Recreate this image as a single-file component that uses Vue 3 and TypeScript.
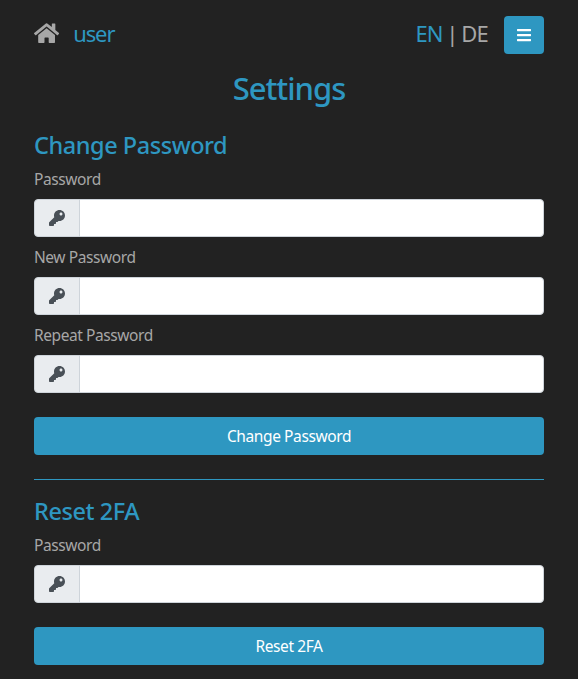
<script setup lang="ts">
import { reactive } from 'vue'

interface Field {
  id: string
  label: string
}

interface Section {
  title: string
  name: string
  fields: Field[]
}

const sections: Section[] = [
  {
    title: 'Change Password',
    name: 'change',
    fields: [
      { id: 'current', label: 'Password' },
      { id: 'next', label: 'New Password' },
      { id: 'repeat', label: 'Repeat Password' },
    ],
  },
  { title: 'Reset 2FA', name: 'reset', fields: [{ id: 'confirm', label: 'Password' }] },
]

const values = reactive<Record<string, string>>({ current: '', next: '', repeat: '', confirm: '' })
</script>

<template>
  <main class="page">
    <header class="topbar">
      <a class="home" aria-label="Home">
        <svg class="home-icon" viewBox="0 0 576 512"><path fill="currentColor" d="M280.37 148.26L96 300.11V464a16 16 0 0 0 16 16l112.06-.29a16 16 0 0 0 15.92-16V368a16 16 0 0 1 16-16h64a16 16 0 0 1 16 16v95.64a16 16 0 0 0 16 16.05L464 480a16 16 0 0 0 16-16V300L295.67 148.26a12.19 12.19 0 0 0-15.3 0zM571.6 251.47L488 182.56V44.05a12 12 0 0 0-12-12h-56a12 12 0 0 0-12 12v72.61L318.47 43a48 48 0 0 0-61 0L4.34 251.47a12 12 0 0 0-1.6 16.9l25.5 31A12 12 0 0 0 45.15 301l235.22-193.74a12.19 12.19 0 0 1 15.3 0L530.9 301a12 12 0 0 0 16.9-1.6l25.5-31a12 12 0 0 0-1.7-16.93z" /></svg>
      </a>
      <a class="user">user</a>
      <div class="lang"><a class="active">EN</a> | <a>DE</a></div>
      <button class="menu" type="button" aria-label="Menu">
        <svg class="menu-icon" viewBox="0 0 448 512"><path fill="currentColor" d="M16 132h416c8.837 0 16-7.163 16-16V76c0-8.837-7.163-16-16-16H16C7.163 60 0 67.163 0 76v40c0 8.837 7.163 16 16 16zm0 160h416c8.837 0 16-7.163 16-16v-40c0-8.837-7.163-16-16-16H16c-8.837 0-16 7.163-16 16v40c0 8.837 7.163 16 16 16zm0 160h416c8.837 0 16-7.163 16-16v-40c0-8.837-7.163-16-16-16H16c-8.837 0-16 7.163-16 16v40c0 8.837 7.163 16 16 16z" /></svg>
      </button>
    </header>

    <h1 class="title">Settings</h1>

    <template v-for="(section, i) in sections" :key="section.name">
      <hr v-if="i > 0" class="rule">
      <form :class="section.name" @submit.prevent>
        <h2 class="heading">{{ section.title }}</h2>
        <div v-for="field in section.fields" :key="field.id" class="field">
          <label :for="field.id">{{ field.label }}</label>
          <div class="group">
            <span class="addon">
              <svg class="key-icon" viewBox="0 0 512 512"><path fill="currentColor" d="M512 176.001C512 273.203 433.202 352 336 352c-11.22 0-22.19-1.062-32.827-3.069l-24.012 27.014A23.999 23.999 0 0 1 261.223 384H224v40c0 13.255-10.745 24-24 24h-40v40c0 13.255-10.745 24-24 24H24c-13.255 0-24-10.745-24-24v-78.059c0-6.365 2.529-12.47 7.029-16.971l161.802-161.802C163.108 213.814 160 195.271 160 176 160 78.798 238.797.001 335.999 0 433.488-.001 512 78.511 512 176.001zM336 128c0 26.51 21.49 48 48 48s48-21.49 48-48-21.49-48-48-48-48 21.49-48 48z" /></svg>
            </span>
            <input :id="field.id" v-model="values[field.id]" class="input" type="password">
          </div>
        </div>
        <button class="submit" type="submit">{{ section.title }}</button>
      </form>
    </template>
  </main>
</template>

<style>
body {
  background: #222;
}
</style>

<style scoped>
* {
  box-sizing: border-box;
}

.page {
  padding: 16px 34px 14px;
  font-family: "Segoe UI", "Noto Sans", "Open Sans", sans-serif;
  font-size: 15.5px;
  line-height: 24px;
  color: #a7a7a7;
  background: #222;
}

.topbar {
  display: flex;
  align-items: center;
  height: 38px;
  font-size: 22px;
  line-height: 34px;
}

.home {
  display: flex;
}

.home-icon {
  width: 25.2px;
  height: 22.4px;
  margin-top: -3px;
}

.user {
  margin: -5px 0 0 14px;
  color: #2e97c1;
  letter-spacing: -1.1px;
}

.lang {
  margin: -5px 16px 0 auto;
  letter-spacing: -0.8px;
  word-spacing: -1.3px;
}

.active {
  color: #2e97c1;
}

.menu {
  display: flex;
  align-items: center;
  justify-content: center;
  width: 40px;
  height: 38px;
  padding: 0;
  border: 0;
  border-radius: 4px;
  color: #fff;
  background: #2e97c1;
}

.menu-icon {
  width: 14px;
  height: 16px;
}

.title {
  margin: 15px 0 0;
  font-size: 31px;
  font-weight: 500;
  line-height: 38px;
  text-align: center;
  color: #2e97c1;
  letter-spacing: -1px;
}

.heading {
  margin: 0 0 9px;
  font-size: 23.5px;
  font-weight: 500;
  line-height: 28px;
  color: #2e97c1;
  letter-spacing: -0.45px;
}

.change {
  margin-top: 24px;
}

.field {
  display: flex;
  flex-direction: column;
  height: 78px;
}

.field label {
  height: 24px;
  margin: -1px 0 8px;
  letter-spacing: -0.42px;
}

.group {
  display: flex;
  height: 38px;
}

.addon {
  display: flex;
  align-items: center;
  justify-content: center;
  width: 46px;
  border: 1px solid #ced4da;
  border-radius: 4px 0 0 4px;
  color: #495057;
  background: #e9ecef;
}

.key-icon {
  width: 16px;
  height: 16px;
}

.input {
  flex: 1;
  min-width: 0;
  margin-left: -1px;
  padding: 6px 12px;
  border: 1px solid #ced4da;
  border-radius: 0 4px 4px 0;
  background: #fff;
}

.submit {
  display: block;
  width: 100%;
  height: 38px;
  margin-top: 15px;
  padding: 0;
  border: 0;
  border-radius: 4px;
  font: inherit;
  color: #fff;
  background: #2e97c1;
  letter-spacing: -0.4px;
}

.rule {
  height: 1px;
  margin: 24px 0 17px;
  border: 0;
  background: #2e97c1;
}
</style>
